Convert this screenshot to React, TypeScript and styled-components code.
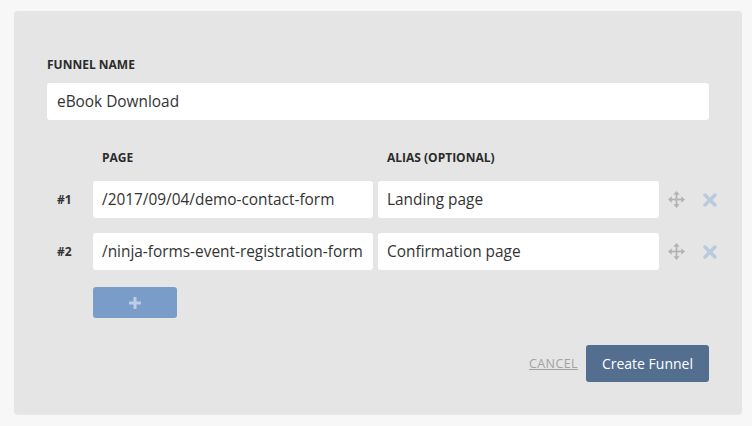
import React from "react";
import styled, { createGlobalStyle } from "styled-components";

const GlobalStyle = createGlobalStyle`
  html, body {
    margin: 0;
    padding: 0;
    background: #f7f7f7;
    font-family: "Open Sans", "Noto Sans", sans-serif;
  }
`;

const Page = styled.div`
  padding: 11px 10px 12px 14px;
`;

const Panel = styled.div`
  background: #e5e5e5;
  border-radius: 4px;
  box-shadow: 0 1px 1px rgba(0, 0, 0, 0.06);
  padding: 46px 33px 32px 33px;
  box-sizing: border-box;
  height: 403px;
`;

const Label = styled.div`
  font-size: 12px;
  line-height: 16px;
  font-weight: 700;
  color: #2b2b2b;
  text-transform: uppercase;
`;

const TextBox = styled.div<{ $pad?: number }>`
  background: #fff;
  border-radius: 3px;
  height: 37px;
  display: flex;
  align-items: center;
  padding-left: ${(p) => p.$pad ?? 10}px;
  box-sizing: border-box;
  font-size: 15.4px;
  color: #333;
  white-space: nowrap;
  overflow: hidden;
`;

const NameBox = styled(TextBox)`
  margin-top: 10px;
`;

const Grid = styled.div`
  margin-top: 30px;
  display: grid;
  grid-template-columns: 41px 280px 281px 1fr;
  column-gap: 5px;
  row-gap: 15px;
  align-items: center;
`;

const HeadCell = styled(Label)<{ $col: number }>`
  grid-column: ${(p) => p.$col};
  padding-left: 9px;
`;

const RowNum = styled.div`
  grid-column: 1;
  font-size: 12px;
  font-weight: 700;
  color: #333;
  padding-left: 10px;
`;

const Actions = styled.div`
  display: flex;
  align-items: center;
  gap: 18px;
  padding-left: 4px;
`;

const AddRow = styled.div`
  margin-top: 17px;
  padding-left: 46px;
`;

const AddButton = styled.button`
  width: 84px;
  height: 31px;
  border: none;
  border-radius: 3px;
  background: #7a9cc8;
  display: flex;
  align-items: center;
  justify-content: center;
  padding: 0;
`;

const Footer = styled.div`
  margin-top: 27px;
  display: flex;
  justify-content: flex-end;
  align-items: center;
  gap: 8px;
`;

const Cancel = styled.a`
  font-size: 12.5px;
  color: #a2a2a2;
  text-decoration: underline;
  letter-spacing: 0.4px;
`;

const Primary = styled.button`
  height: 37px;
  padding: 0 16px;
  border: none;
  border-radius: 3px;
  background: #546e8f;
  color: #fff;
  font-family: "Open Sans", sans-serif;
  font-size: 14px;
`;

const MoveIcon = () => (
  <svg width="17" height="17" viewBox="0 0 16 16" fill="#b3b3b3">
    <rect x="7.2" y="2" width="1.6" height="12" />
    <rect x="2" y="7.2" width="12" height="1.6" />
    <polygon points="8,0 11,3.5 5,3.5" />
    <polygon points="8,16 11,12.5 5,12.5" />
    <polygon points="0,8 3.5,5 3.5,11" />
    <polygon points="16,8 12.5,5 12.5,11" />
  </svg>
);

const CloseIcon = () => (
  <svg width="14" height="14" viewBox="0 0 14 14">
    <path d="M2 2 L12 12 M12 2 L2 12" stroke="#b9c9df" strokeWidth="3.4" strokeLinecap="round" />
  </svg>
);

const PlusIcon = () => (
  <svg width="12" height="12" viewBox="0 0 12 12" fill="#bccde6">
    <rect x="4.5" y="0" width="3" height="12" rx="0.5" />
    <rect x="0" y="4.5" width="12" height="3" rx="0.5" />
  </svg>
);

const rows = [
  { page: "/2017/09/04/demo-contact-form", alias: "Landing page" },
  { page: "/ninja-forms-event-registration-form", alias: "Confirmation page" },
];

export default function App() {
  return (
    <Page>
      <GlobalStyle />
      <Panel>
        <Label>Funnel Name</Label>
        <NameBox>eBook Download</NameBox>
        <Grid>
          <HeadCell $col={2}>Page</HeadCell>
          <HeadCell $col={3}>Alias (optional)</HeadCell>
          {rows.map((r, i) => (
            <React.Fragment key={i}>
              <RowNum>#{i + 1}</RowNum>
              <TextBox $pad={9}>{r.page}</TextBox>
              <TextBox $pad={9}>{r.alias}</TextBox>
              <Actions>
                <MoveIcon />
                <CloseIcon />
              </Actions>
            </React.Fragment>
          ))}
        </Grid>
        <AddRow>
          <AddButton>
            <PlusIcon />
          </AddButton>
        </AddRow>
        <Footer>
          <Cancel>CANCEL</Cancel>
          <Primary>Create Funnel</Primary>
        </Footer>
      </Panel>
    </Page>
  );
}
